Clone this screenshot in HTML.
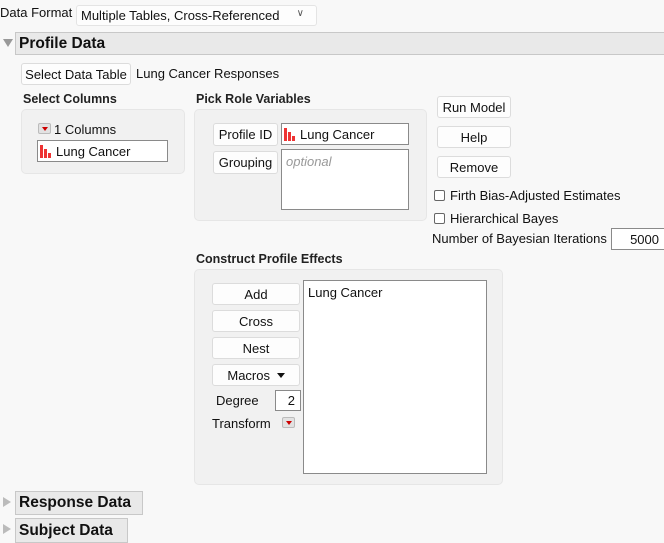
<!DOCTYPE html>
<html><head><style>
body{margin:0;width:664px;height:542px;background:#f8f8f8;font-family:"Liberation Sans",sans-serif;font-size:13px;color:#111;position:relative;overflow:hidden}
.a{position:absolute;white-space:nowrap}
.btn{position:absolute;background:#fdfdfd;border:1px solid #dcdcdc;border-radius:3px;box-sizing:border-box;text-align:center;display:flex;align-items:center;justify-content:center;font-size:13px}
.panel{position:absolute;background:#f1f1f1;border:1px solid #e6e6e6;border-radius:5px;box-sizing:border-box}
.box{position:absolute;background:#fff;border:1px solid #8a8a8a;box-sizing:border-box}
.hdr{position:absolute;background:#e9e9e9;border:1px solid #c8c8c8;box-sizing:border-box;font-weight:bold;font-size:15.5px;padding-left:3px;display:flex;align-items:center}
.lbl{font-weight:bold;font-size:12.5px;color:#222}
.tri{position:absolute;width:0;height:0}
.red{position:absolute;width:13px;height:11px;background:#e2e2e2;border:1px solid #bbb;border-radius:2px;box-sizing:border-box}
.red:after{content:"";position:absolute;left:3px;top:3px;border-left:3px solid transparent;border-right:3px solid transparent;border-top:4px solid #c00}
.cb{position:absolute;width:11px;height:11px;border:1px solid #666;border-radius:2px;background:#fff;box-sizing:border-box}
</style></head><body>
<div class="a" style="left:0;top:5px">Data Format</div>
<div class="btn" style="left:76px;top:5px;width:241px;height:21px;justify-content:flex-start;padding-left:4px;border-color:#e4e4e4">Multiple Tables, Cross-Referenced<span style="position:absolute;right:12px;top:2px;font-size:10px;color:#555">&#x2228;</span></div>
<div class="tri" style="left:3px;top:39px;border-left:5px solid transparent;border-right:5px solid transparent;border-top:8px solid #999"></div>
<div class="hdr" style="left:15px;top:32px;width:660px;height:23px">Profile Data</div>
<div class="btn" style="left:21px;top:63px;width:110px;height:22px">Select Data Table</div>
<div class="a" style="left:136px;top:66px">Lung Cancer Responses</div>
<div class="a lbl" style="left:23px;top:92px">Select Columns</div>
<div class="panel" style="left:21px;top:109px;width:164px;height:65px"></div>
<div class="red" style="left:38px;top:123px"></div>
<div class="a" style="left:54px;top:122px">1 Columns</div>
<div class="box" style="left:37px;top:140px;width:131px;height:22px"></div>
<svg class="a" style="left:40px;top:144px" width="14" height="14"><rect x="0" y="1" width="3" height="13" fill="#e33"/><rect x="4" y="5" width="3" height="9" fill="#e33"/><rect x="8" y="9" width="3" height="5" fill="#e33"/></svg>
<div class="a" style="left:56px;top:144px">Lung Cancer</div>
<div class="a lbl" style="left:196px;top:92px">Pick Role Variables</div>
<div class="panel" style="left:194px;top:109px;width:233px;height:112px"></div>
<div class="btn" style="left:213px;top:123px;width:65px;height:23px">Profile ID</div>
<div class="box" style="left:281px;top:123px;width:128px;height:22px"></div>
<svg class="a" style="left:284px;top:127px" width="14" height="14"><rect x="0" y="1" width="3" height="13" fill="#e33"/><rect x="4" y="5" width="3" height="9" fill="#e33"/><rect x="8" y="9" width="3" height="5" fill="#e33"/></svg>
<div class="a" style="left:300px;top:127px">Lung Cancer</div>
<div class="btn" style="left:213px;top:151px;width:65px;height:23px">Grouping</div>
<div class="box" style="left:281px;top:149px;width:128px;height:61px"></div>
<div class="a" style="left:286px;top:154px;color:#999;font-style:italic">optional</div>
<div class="btn" style="left:437px;top:96px;width:74px;height:22px">Run Model</div>
<div class="btn" style="left:437px;top:126px;width:74px;height:22px">Help</div>
<div class="btn" style="left:437px;top:156px;width:74px;height:22px">Remove</div>
<div class="cb" style="left:434px;top:190px"></div>
<div class="a" style="left:450px;top:188px">Firth Bias-Adjusted Estimates</div>
<div class="cb" style="left:434px;top:213px"></div>
<div class="a" style="left:450px;top:211px">Hierarchical Bayes</div>
<div class="a" style="left:432px;top:231px">Number of Bayesian Iterations</div>
<div class="box" style="left:611px;top:228px;width:60px;height:22px;text-align:right;padding:3px 11px 0 0">5000</div>
<div class="a lbl" style="left:196px;top:252px">Construct Profile Effects</div>
<div class="panel" style="left:194px;top:269px;width:309px;height:216px"></div>
<div class="btn" style="left:212px;top:283px;width:88px;height:22px">Add</div>
<div class="btn" style="left:212px;top:310px;width:88px;height:22px">Cross</div>
<div class="btn" style="left:212px;top:337px;width:88px;height:22px">Nest</div>
<div class="btn" style="left:212px;top:364px;width:88px;height:22px">Macros&nbsp;<span style="display:inline-block;border-left:4px solid transparent;border-right:4px solid transparent;border-top:5px solid #111;margin-left:3px"></span></div>
<div class="a" style="left:216px;top:393px">Degree</div>
<div class="box" style="left:275px;top:390px;width:26px;height:21px;text-align:right;padding:2px 5px 0 0">2</div>
<div class="a" style="left:212px;top:416px">Transform</div>
<div class="red" style="left:282px;top:417px"></div>
<div class="box" style="left:303px;top:280px;width:184px;height:194px"></div>
<div class="a" style="left:308px;top:285px">Lung Cancer</div>
<div class="tri" style="left:3px;top:497px;border-top:5px solid transparent;border-bottom:5px solid transparent;border-left:8px solid #bbb"></div>
<div class="hdr" style="left:15px;top:491px;width:128px;height:24px">Response Data</div>
<div class="tri" style="left:3px;top:524px;border-top:5px solid transparent;border-bottom:5px solid transparent;border-left:8px solid #bbb"></div>
<div class="hdr" style="left:15px;top:518px;width:113px;height:25px">Subject Data</div>
</body></html>
